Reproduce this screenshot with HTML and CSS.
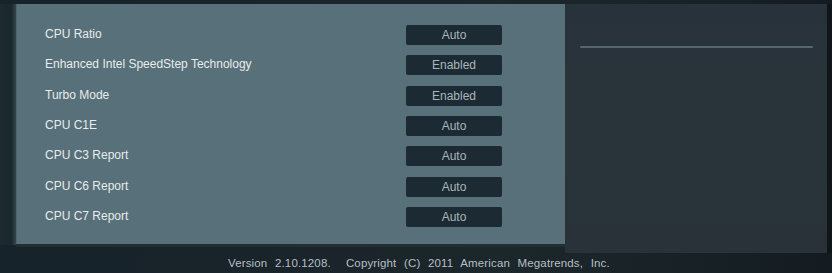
FILE: index.html
```html
<!DOCTYPE html>
<html>
<head>
<meta charset="utf-8">
<link rel="stylesheet" href="styles.css">
</head>
<body>
<div class="screen">
  <div class="top">
    <div class="left-edge"></div>
    <div class="panel">
      <div class="row"><span class="label">CPU Ratio</span><span class="value">Auto</span></div>
      <div class="row"><span class="label">Enhanced Intel SpeedStep Technology</span><span class="value">Enabled</span></div>
      <div class="row"><span class="label">Turbo Mode</span><span class="value">Enabled</span></div>
      <div class="row"><span class="label">CPU C1E</span><span class="value">Auto</span></div>
      <div class="row"><span class="label">CPU C3 Report</span><span class="value">Auto</span></div>
      <div class="row"><span class="label">CPU C6 Report</span><span class="value">Auto</span></div>
      <div class="row"><span class="label">CPU C7 Report</span><span class="value">Auto</span></div>
    </div>
    <div class="help">
      <div class="help-line"></div>
    </div>
    <div class="right-edge"></div>
  </div>
  <div class="footer">Version 2.10.1208. &nbsp;Copyright (C) 2011 American Megatrends, Inc.</div>
</div>
</body>
</html>
```
FILE: styles.css
```css
html, body {
  margin: 0;
  padding: 0;
  background: #141d22;
}
.screen {
  width: 832px;
  height: 273px;
  background: linear-gradient(90deg, #16232a 0%, #1a242a 40%, #1c272c 60%, #141c21 100%);
  display: flex;
  flex-direction: column;
  font-family: "Liberation Sans", Arial, sans-serif;
  overflow: hidden;
}
.top {
  display: flex;
  padding-top: 4px;
  height: 253px;
  box-sizing: border-box;
  align-items: flex-start;
}
.left-edge {
  width: 16px;
  height: 241px;
  background: linear-gradient(90deg, #1d2a30 0%, #1a272d 70%, #33474f 100%);
}
.panel {
  width: 549px;
  height: 240px;
  box-sizing: border-box;
  background: #577079;
  padding: 21px 0 0 29px;
  display: flex;
  flex-direction: column;
  box-shadow: inset 1px 0 0 #4e656e, 0 3px 0 #222e33;
}
.row {
  height: 30.33px;
  display: flex;
  align-items: flex-start;
  flex-shrink: 0;
}
.label {
  width: 361px;
  font-size: 12px;
  color: #e8ecec;
  line-height: 19px;
}
.value {
  width: 96px;
  height: 20px;
  line-height: 20px;
  background: #1c2a33;
  border-radius: 2px;
  color: #aab5ba;
  font-size: 12px;
  text-align: center;
}
.help {
  width: 262px;
  height: 249px;
  background: linear-gradient(180deg, #28323a 0%, #29343a 60%, #283238 100%);
  padding-top: 42px;
  box-sizing: border-box;
  display: flex;
  justify-content: center;
}
.help-line {
  width: 233px;
  height: 2px;
  background: #56686f;
  border-radius: 1px;
}
.right-edge {
  width: 5px;
  height: 249px;
  background: #101519;
}
.footer {
  padding-left: 228px;
  font-size: 11.5px;
  color: #b6bfc3;
  word-spacing: 4.2px;
  letter-spacing: 0.15px;
  line-height: 14px;
  margin-top: 3px;
}
```
